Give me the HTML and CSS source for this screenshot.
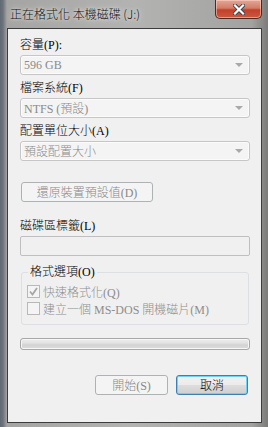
FILE: index.html
```html
<!DOCTYPE html>
<html lang="zh-Hant">
<head>
  <meta charset="UTF-8" />
  <title>正在格式化 本機磁碟 (J:)</title>
  <link rel="stylesheet" href="styles.css">
</head>
<body>
  <div class="window">
    <div class="titlebar">
      <span class="title">正在格式化 本機磁碟 (J:)</span>
      <button class="close" aria-label="關閉">
        <svg width="12" height="11" viewBox="0 0 12 11">
          <path d="M2 1.5 L10 9.5 M10 1.5 L2 9.5" stroke="#3b3f4a" stroke-width="4" stroke-linecap="square" fill="none"/>
          <path d="M2 1.5 L10 9.5 M10 1.5 L2 9.5" stroke="#fff" stroke-width="2.2" stroke-linecap="square" fill="none"/>
        </svg>
      </button>
    </div>

    <div class="client">
      <div class="label first">容量(P):</div>
      <div class="combo"><span>596 GB</span><i class="arrow"></i></div>

      <div class="label">檔案系統(F)</div>
      <div class="combo"><span>NTFS (預設)</span><i class="arrow"></i></div>

      <div class="label">配置單位大小(A)</div>
      <div class="combo"><span>預設配置大小</span><i class="arrow"></i></div>

      <button class="btn restore" disabled>還原裝置預設值(D)</button>

      <div class="label volume">磁碟區標籤(L)</div>
      <div class="edit"></div>

      <fieldset class="group">
        <legend>格式選項(O)</legend>
        <div class="check">
          <span class="box">
            <svg width="9" height="9" viewBox="0 0 9 9"><path d="M1 4.5 L3.5 7.5 L8 1" stroke="#a6a6a6" stroke-width="1.8" fill="none"/></svg>
          </span>
          <span>快速格式化(Q)</span>
        </div>
        <div class="check">
          <span class="box"></span>
          <span>建立一個 MS-DOS 開機磁片(M)</span>
        </div>
      </fieldset>

      <div class="progress"></div>

      <div class="actions">
        <button class="btn" disabled>開始(S)</button>
        <button class="btn default">取消</button>
      </div>
    </div>
  </div>
</body>
</html>
```

FILE: styles.css
```css
* { box-sizing: border-box; }
body {
  margin: 0;
  background: #8f908e;
  font-family: "Liberation Serif", "Noto Sans CJK TC", serif;
  font-size: 12px;
  font-weight: 300;
  color: #000;
}
.window {
  width: 268px;
  height: 427px;
  display: flex;
  flex-direction: column;
  background:
    linear-gradient(90deg, #5d6a78 0, #6f7277 3px, #a4a5a3 7px, #b3b4b2 50%, #a2a3a1 94%, #7b7b7a 100%);
}
.titlebar {
  height: 28px;
  display: flex;
  align-items: flex-start;
  padding: 0 6px 0 10px;
}
.title {
  font-family: "Noto Sans CJK TC", sans-serif;
  font-size: 12px;
  font-weight: 300;
  line-height: 28px;
  color: #111;
  text-shadow: 0 0 6px #e8e8e6, 0 0 3px #e8e8e6;
}
.close {
  margin-left: auto;
  width: 47px;
  height: 19px;
  padding: 0;
  border: 1px solid #4b2a25;
  border-top: none;
  border-radius: 0 0 5px 5px;
  background: linear-gradient(#e3a898 0, #d47c66 45%, #c3402a 55%, #c95a40 100%);
  box-shadow: inset 0 0 0 1px rgba(255, 220, 210, 0.5);
  display: flex;
  justify-content: center;
  align-items: center;
}
.client {
  flex: 1;
  margin: 0 6px 4px 7px;
  border: 1px solid #3c3c3c;
  background: #f0f0f0;
  padding: 0 11px 0 12px;
  display: flex;
  flex-direction: column;
  align-items: flex-start;
}
.label {
  height: 16px;
  line-height: 16px;
  margin-top: 5px;
  margin-bottom: 2px;
}
.label.first { margin-top: 8px; }
.label.volume { margin-top: 16px; }
.combo {
  width: 230px;
  height: 20px;
  border: 1px solid #c6c6c6;
  border-radius: 3px;
  background: #f4f4f4;
  box-shadow: inset 0 0 0 1px #fbfbfb;
  display: flex;
  align-items: center;
  padding: 0 0 0 3px;
  color: #8a8a8a;
}
.combo span { flex: 1; }
.arrow {
  width: 0;
  height: 0;
  border-left: 4px solid transparent;
  border-right: 4px solid transparent;
  border-top: 4px solid #a9a9a9;
  margin-right: 6px;
}
.btn {
  height: 20px;
  font: inherit;
  padding: 0;
  border: 1px solid #adb2b5;
  border-radius: 3px;
  background: #f4f4f4;
  color: #888;
}
.restore {
  margin-top: 21px;
  margin-left: 1px;
  width: 132px;
}
.edit {
  width: 230px;
  height: 20px;
  border: 1px solid #bfbfbf;
  border-radius: 2px;
  background: #f0f0f0;
}
.group {
  margin: 8px 0 0 1px;
  width: 228px;
  border: 1px solid #dcdfe3;
  border-radius: 3px;
  padding: 3px 0 7px 5px;
}
.group legend {
  padding: 0 2px;
  margin-left: 1px;
  line-height: 16px;
}
.check {
  height: 17px;
  display: flex;
  align-items: center;
  gap: 3px;
  color: #8d8d8d;
}
.box {
  width: 13px;
  height: 13px;
  border: 1px solid #b8b8b8;
  background: #f4f4f4;
  display: flex;
  justify-content: center;
  align-items: center;
}
.progress {
  margin-top: 13px;
  width: 230px;
  height: 12px;
  border: 1px solid #a8a8a8;
  border-radius: 3px;
  background: linear-gradient(#ececec 0, #e2e2e2 40%, #d3d3d3 60%, #dcdcdc 100%);
  box-shadow: inset 0 0 0 1px #f6f6f6;
}
.actions {
  margin-top: 25px;
  align-self: stretch;
  display: flex;
  justify-content: flex-end;
  gap: 8px;
  padding-right: 2px;
}
.actions .btn { width: 73px; }
.btn.default {
  width: 72px;
  border: 1px solid #3c7fb1;
  color: #000;
  background: linear-gradient(#f2f2f2 0, #ebebeb 50%, #dddddd 50%, #cfcfcf 100%);
  box-shadow: inset 0 0 0 1px #6ed2f5;
}
```
